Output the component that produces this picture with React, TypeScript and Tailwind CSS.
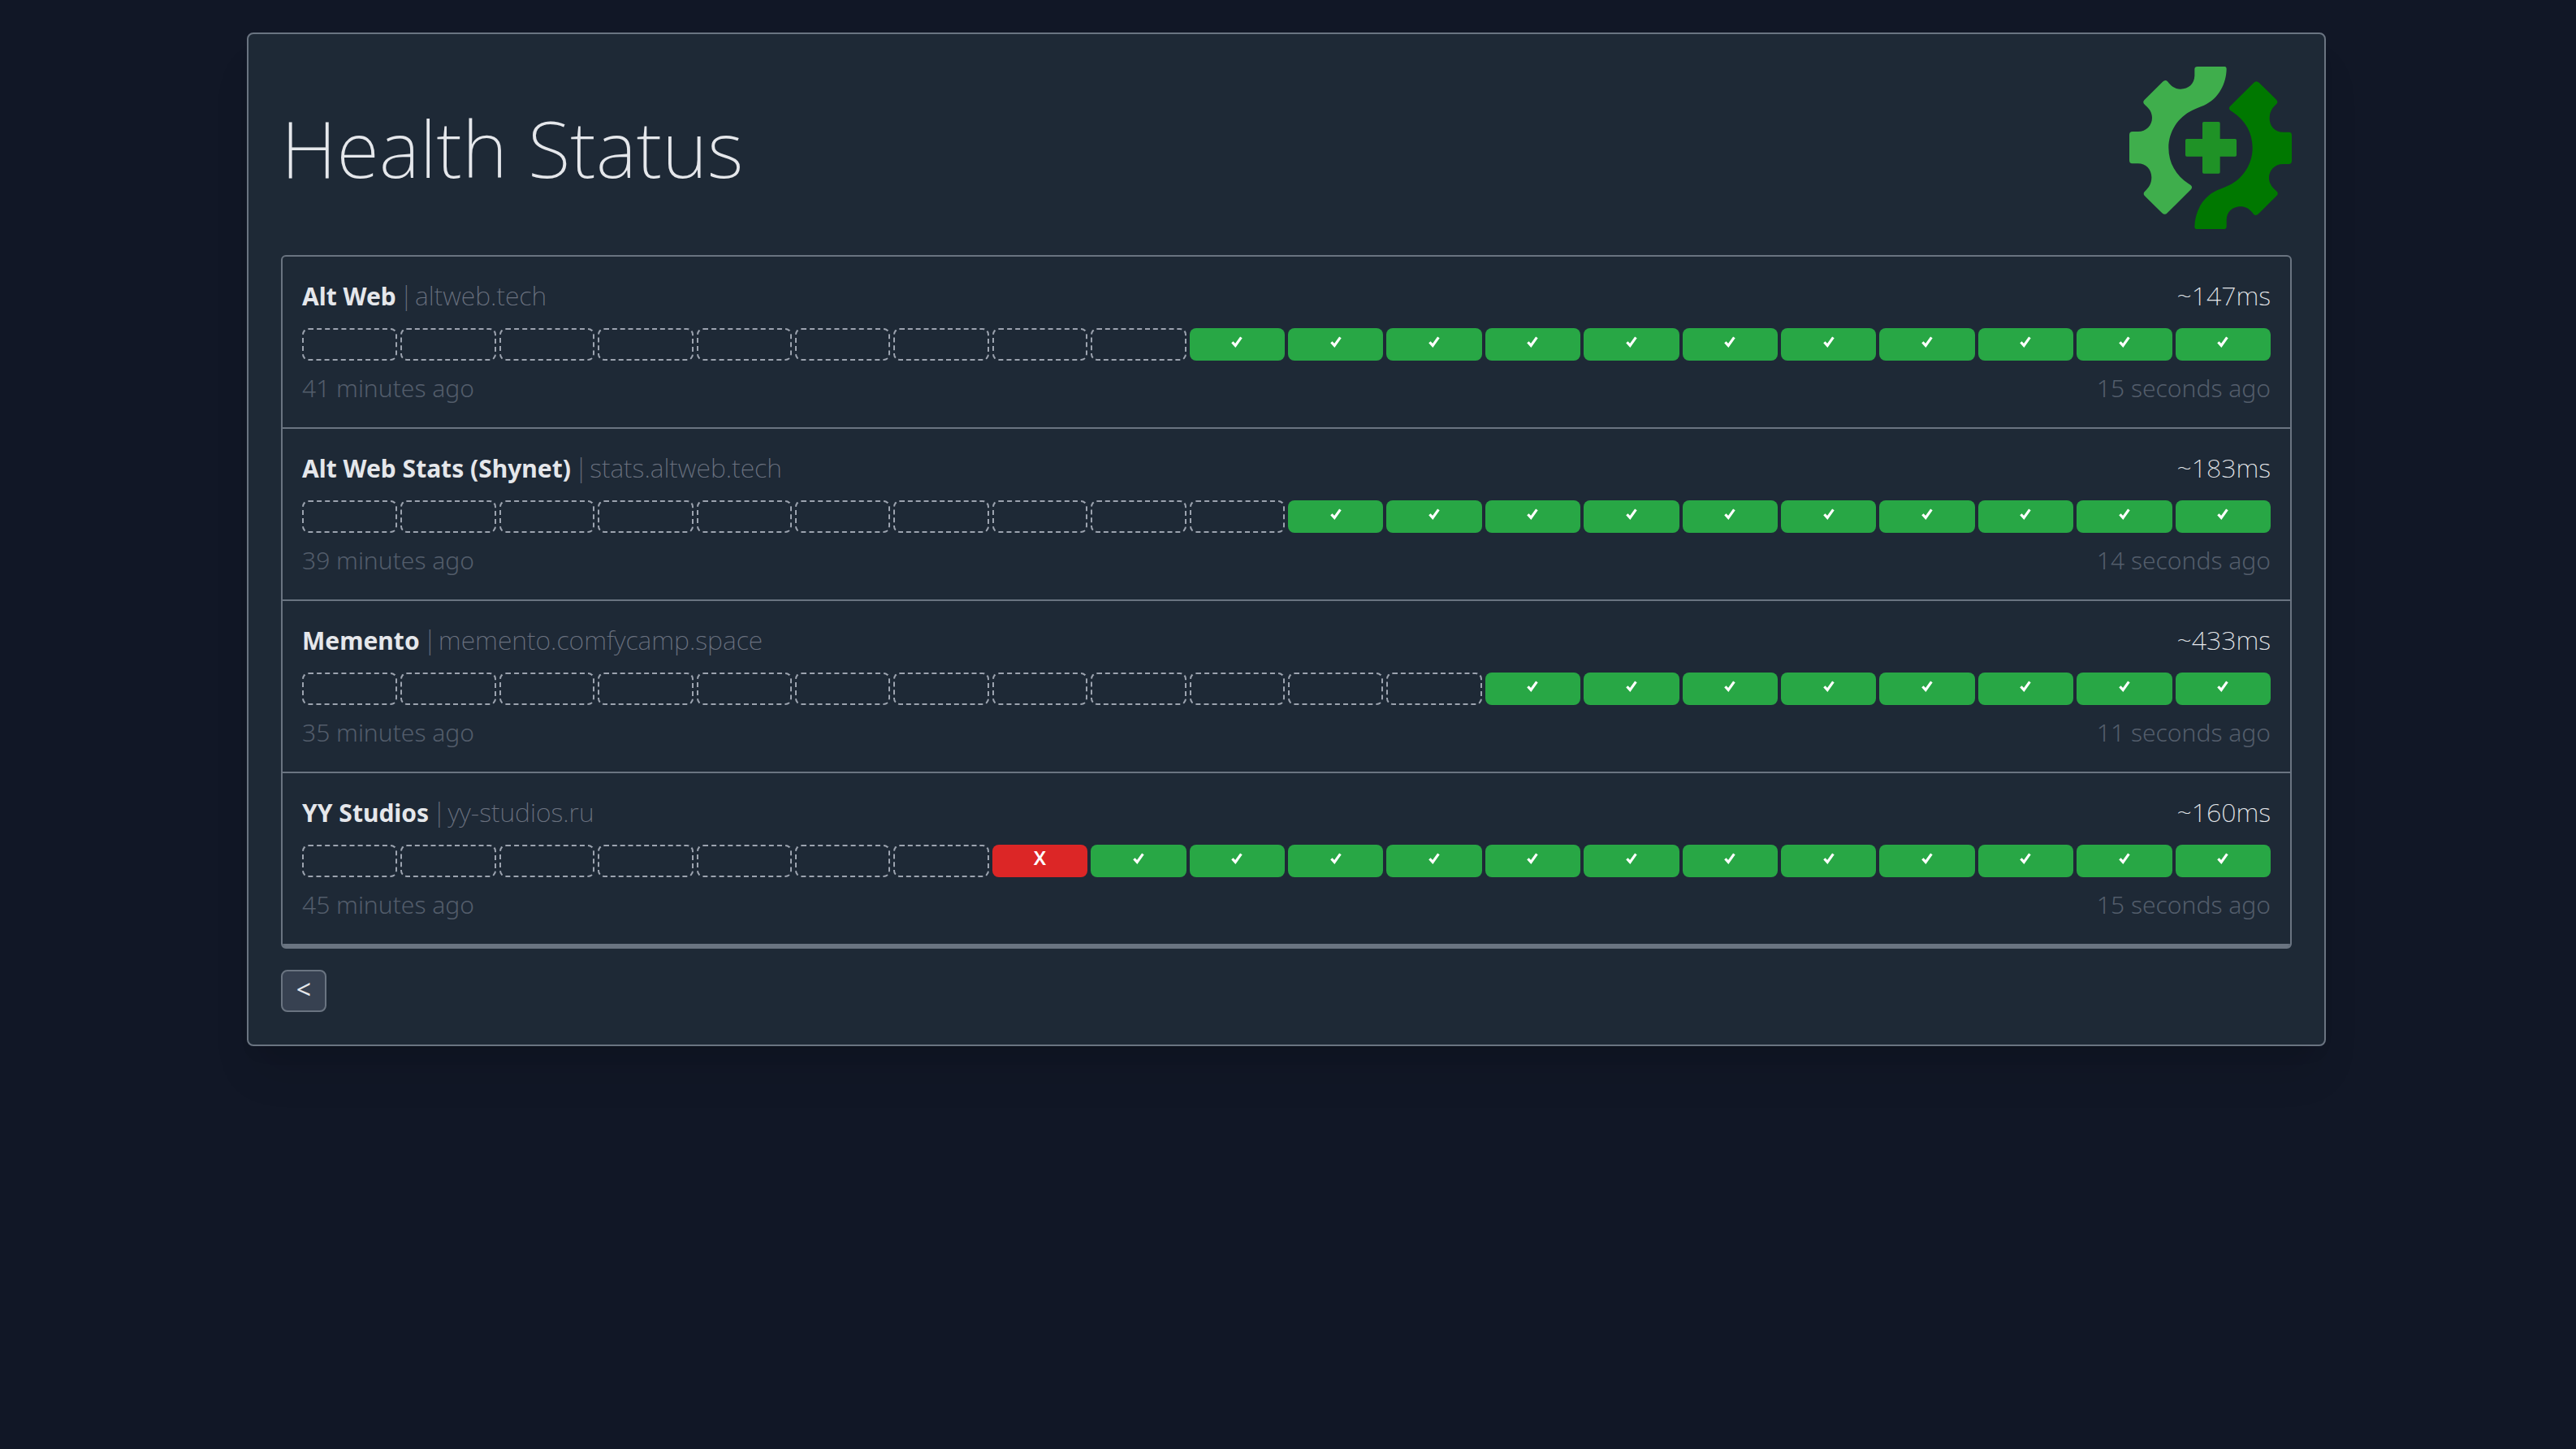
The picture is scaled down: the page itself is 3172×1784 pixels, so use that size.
type Result = "none" | "up" | "down";

interface Service {
  name: string;
  host: string;
  latency: string;
  oldest: string;
  newest: string;
  results: Result[];
}

const SLOTS = 20;

function history(...checks: [Result, number][]): Result[] {
  const filled = checks.flatMap(([result, count]) => Array<Result>(count).fill(result));
  return [...Array<Result>(SLOTS - filled.length).fill("none"), ...filled];
}

const services: Service[] = [
  {
    name: "Alt Web",
    host: "altweb.tech",
    latency: "~147ms",
    oldest: "41 minutes ago",
    newest: "15 seconds ago",
    results: history(["up", 11]),
  },
  {
    name: "Alt Web Stats (Shynet)",
    host: "stats.altweb.tech",
    latency: "~183ms",
    oldest: "39 minutes ago",
    newest: "14 seconds ago",
    results: history(["up", 10]),
  },
  {
    name: "Memento",
    host: "memento.comfycamp.space",
    latency: "~433ms",
    oldest: "35 minutes ago",
    newest: "11 seconds ago",
    results: history(["up", 8]),
  },
  {
    name: "YY Studios",
    host: "yy-studios.ru",
    latency: "~160ms",
    oldest: "45 minutes ago",
    newest: "15 seconds ago",
    results: history(["down", 1], ["up", 12]),
  },
];

const GEAR_HALF =
  "M318 66H418Q425 66 425 75C424 128 397 184 342 209C326 216 312 220 299 227C246 252 211 306 211 366C211 422 238 467 284 498L293 504Q300 510 295 518L206 607Q197 616 187 607L123 544Q115 535 123 527C138 514 148 498 148 475C148 445 127 424 98 424H76Q66 424 66 412V318Q66 306 78 306H98C129 306 150 283 150 255C150 236 140 221 124 208Q113 198 121 190L189 122Q199 113 207 121C220 138 233 149 255 149C285 149 306 130 307 100V76Q307 66 318 66Z";

function Logo() {
  return (
    <svg viewBox="66 66 600 600" className="size-50" role="img" aria-label="Gatus">
      <path d={GEAR_HALF} fill="#3fae4c" />
      <path d={GEAR_HALF} fill="#007800" transform="rotate(180 366 366)" />
      <path
        d="M341 270H396Q401 270 401 275V333H457Q462 333 462 338V393Q462 398 457 398H401V456Q401 461 396 461H341Q336 461 336 456V398H278Q273 398 273 393V338Q273 333 278 333H336V275Q336 270 341 270Z"
        fill="#1f9226"
      />
    </svg>
  );
}

function ResultBar({ result }: { result: Result }) {
  if (result === "none") {
    return <li className="h-10 rounded-lg border-2 border-dashed border-[#9ca3af]" />;
  }
  if (result === "down") {
    return (
      <li className="h-10 rounded-lg bg-[#dc2626] text-center text-2xl leading-8 font-semibold text-white">
        X
      </li>
    );
  }
  return (
    <li className="flex h-10 justify-center rounded-lg bg-[#28a745] pt-2.5">
      <svg viewBox="0 0 14 14" className="size-3.5" role="img" aria-label="Healthy">
        <path d="M1.4 7.2L5.2 11.4L12.4 1.4" fill="none" stroke="#fff" strokeWidth="3.2" />
      </svg>
    </li>
  );
}

function ServiceRow({ service }: { service: Service }) {
  return (
    <li className="border-b-2 border-[#6a7481] p-6">
      <div className="flex h-12 items-baseline text-[32px] leading-12 font-extralight">
        <span className="mr-1 text-3xl leading-12 font-bold">{service.name}</span>
        <span className="mr-0.5 text-[#6b7280]">|</span>
        <a href={"https://" + service.host} className="text-[#6b7280]">
          {service.host}
        </a>
        <span className="ml-auto">{service.latency}</span>
      </div>
      <ul className="mt-4 grid grid-cols-20 gap-1">
        {service.results.map((result, i) => (
          <ResultBar key={i} result={result} />
        ))}
      </ul>
      <div className="mt-2.5 flex justify-between text-3xl leading-12 font-light text-[#535d6b]">
        <span>{service.oldest}</span>
        <span>{service.newest}</span>
      </div>
    </li>
  );
}

export default function App() {
  return (
    <div className="min-h-screen bg-[#111726] py-10 pr-1 font-['Noto_Sans',sans-serif] text-[#e5e7eb]">
      <main className="mx-auto max-w-[2560px] rounded-lg border-2 border-[#6a7481] bg-[#1e2936] p-10 shadow-[0_40px_50px_-10px_rgba(0,0,0,0.1),0_16px_20px_-12px_rgba(0,0,0,0.1)]">
        <header className="mb-8 flex items-center justify-between">
          <h1 className="text-[96px] leading-24 font-extralight">Health Status</h1>
          <Logo />
        </header>
        <ul className="overflow-hidden rounded-md border-2 border-b-4 border-[#6a7481]">
          {services.map((service) => (
            <ServiceRow key={service.name} service={service} />
          ))}
        </ul>
        <button
          type="button"
          aria-label="Previous page"
          className="mt-6.5 flex h-13 w-14 items-center justify-center rounded-lg border-2 border-[#6a7481] bg-[#374151] pb-1 text-[32px] leading-12"
        >
          &lt;
        </button>
      </main>
    </div>
  );
}
